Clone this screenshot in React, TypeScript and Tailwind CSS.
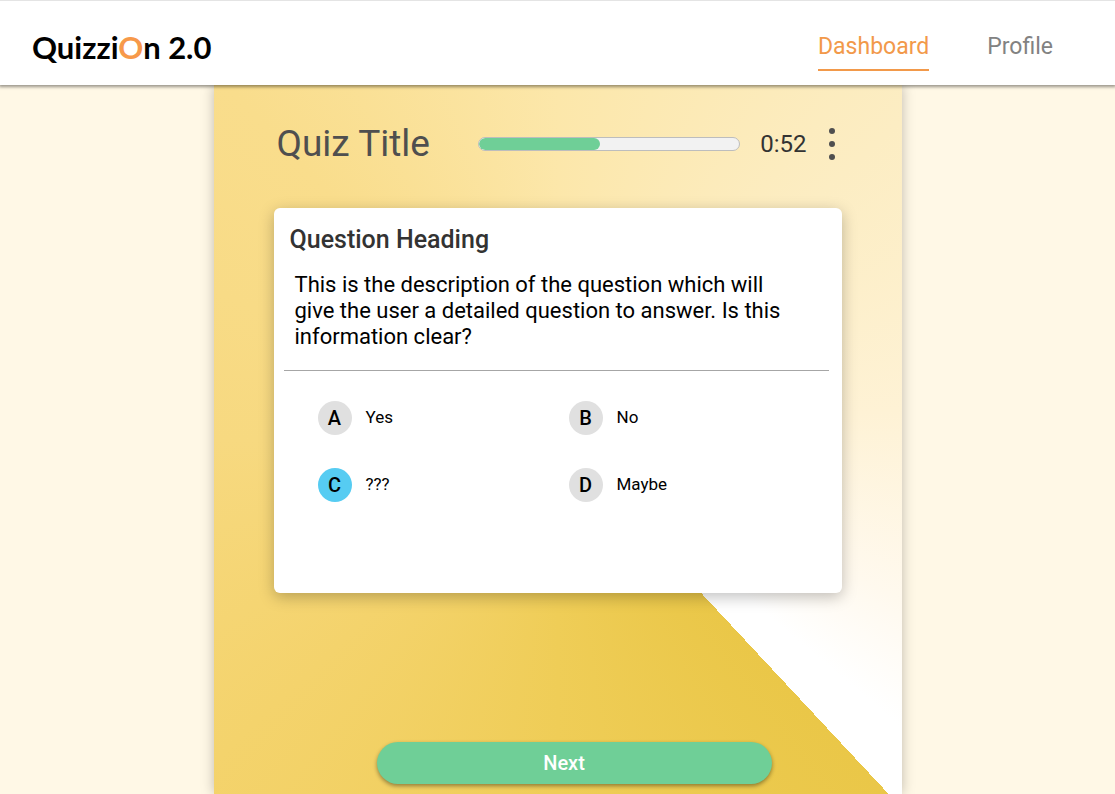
import { useState } from "react";

const options = [
  { key: "A", text: "Yes" },
  { key: "B", text: "No" },
  { key: "C", text: "???" },
  { key: "D", text: "Maybe" },
];

function Header() {
  return (
    <header className="relative z-10 flex h-[85px] items-center justify-between border-t border-[#e4e4e4] bg-white pr-[62px] pl-8 shadow-[0_1px_3px_1px_rgba(0,0,0,0.4)]">
      <h1 className="pt-2 font-['Lato'] text-[31px] leading-9 font-bold text-black">
        Quizzi<span className="text-[#f7994a]">O</span>n 2.0
      </h1>
      <nav className="flex gap-[58px] pt-2 text-[23px] leading-8">
        <a href="#dashboard" aria-current="page" className="border-b-2 border-[#f2994a] pt-2 pb-[6px] text-[#f2994a]">
          Dashboard
        </a>
        <a href="#profile" className="border-b-2 border-transparent pt-2 pb-[6px] text-[#828282]">
          Profile
        </a>
      </nav>
    </header>
  );
}

function QuizBar({ progress }: { progress: number }) {
  return (
    <div className="flex h-12 items-center pr-1 pl-[3px]">
      <h2 className="text-[37px] leading-11 whitespace-nowrap text-[#4f4f4f]">Quiz Title</h2>
      <div
        role="progressbar"
        aria-label="Quiz progress"
        aria-valuenow={progress}
        className="ml-12 h-[14px] flex-1 overflow-hidden rounded-full border border-[#bdbdbd] bg-[#f2f2f2]"
      >
        <div className="h-full rounded-full bg-[#6fcf97]" style={{ width: `${progress}%` }} />
      </div>
      <span className="ml-5 text-2xl text-[#333333]">0:52</span>
      <button type="button" aria-label="More options" className="ml-[19px] text-[#4f4f4f]">
        <svg width="12" height="34" viewBox="0 0 12 34" fill="currentColor" aria-hidden="true">
          <circle cx="6" cy="4" r="3" />
          <circle cx="6" cy="17" r="3" />
          <circle cx="6" cy="30" r="3" />
        </svg>
      </button>
    </div>
  );
}

function QuestionCard() {
  const [answer, setAnswer] = useState("C");
  return (
    <section className="mt-10 min-h-[385px] rounded-md bg-white pt-4 pr-[13px] pl-[10px] shadow-[0_4px_15px_rgba(0,0,0,0.25)]">
      <h3 className="pl-[6px] text-[25px] leading-8 font-medium text-[#333333]">Question Heading</h3>
      <p className="mt-4 max-w-[510px] pl-[11px] text-[22px] leading-[26px] text-black">
        This is the description of the question which will give the user a detailed question to answer. Is this
        information clear?
      </p>
      <hr className="mt-5 border-[#a6a6a6]" />
      <fieldset aria-label="Answers" className="mt-[30px] grid grid-cols-[251px_1fr] gap-y-[33px] pl-[34px]">
        {options.map((o) => (
          <label key={o.key} className="flex cursor-pointer items-center gap-[14px] text-[17px] text-black">
            <input
              type="radio"
              name="answer"
              value={o.key}
              checked={answer === o.key}
              onChange={() => setAnswer(o.key)}
              className="peer sr-only"
            />
            <span className="flex size-[34px] items-center justify-center rounded-full bg-[#e0e0e0] text-xl font-medium peer-checked:bg-[#56ccf2]">
              {o.key}
            </span>
            {o.text}
          </label>
        ))}
      </fieldset>
    </section>
  );
}

export default function App() {
  return (
    <div className="flex min-h-screen flex-col bg-[#fff8e6] font-['Roboto',sans-serif]">
      <Header />
      <main className="mx-auto flex w-full max-w-[688px] flex-1 flex-col bg-[conic-gradient(from_137deg,#eac748_0deg,#efcd57_43deg,#f4d36c_90deg,#f7d980_133deg,#f9dd8c_180deg,#fce7aa_223deg,#fcedc3_270deg,#fef2d5_308deg,#fff9ee_338deg,#ffffff_353deg,#ffffff_360deg)] px-[60px] pt-[35px] pb-[10px] shadow-[0_0_12px_rgba(0,0,0,0.25)]">
        <QuizBar progress={46.5} />
        <QuestionCard />
        <button
          type="button"
          className="mt-auto mr-[70px] ml-[103px] h-[42px] rounded-full bg-[#6fcf97] pr-5 text-xl font-medium text-white shadow-[0_2px_4px_rgba(0,0,0,0.4)]"
        >
          Next
        </button>
      </main>
    </div>
  );
}
